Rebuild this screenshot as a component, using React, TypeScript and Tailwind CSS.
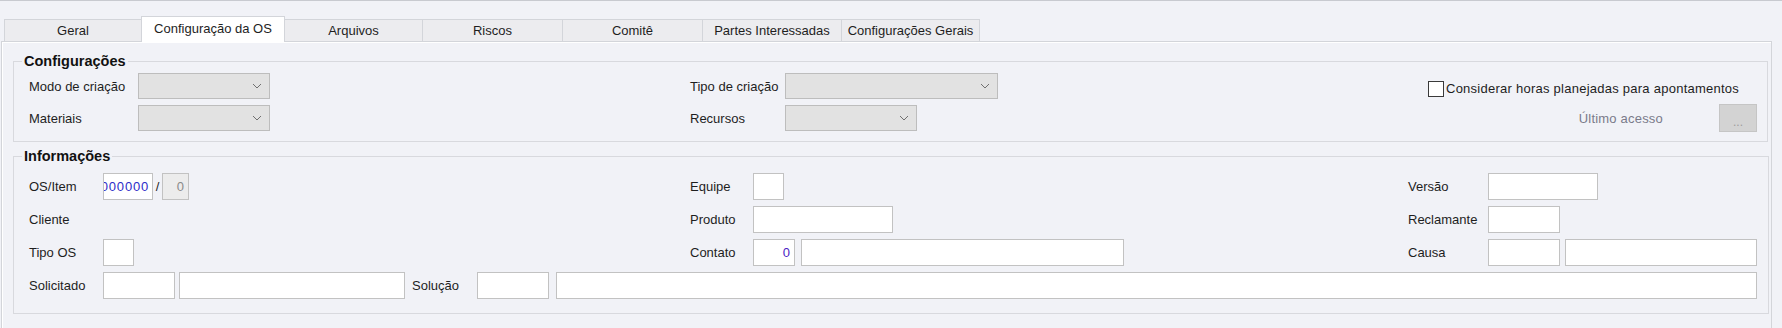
import React from "react";

function Chevron() {
  return (
    <svg width="10" height="6" viewBox="0 0 10 6" className="absolute right-[7px] top-1/2 -translate-y-1/2">
      <polyline points="1,1 5,5 9,1" fill="none" stroke="#707070" strokeWidth="1" />
    </svg>
  );
}

function Select({ w }: { w: string }) {
  return <div className={`relative h-[26px] ${w} border border-[#bdbdbd] bg-[#e2e2e2]`}><Chevron /></div>;
}

function Input({ w, children, tone }: { w: string; children?: React.ReactNode; tone?: string }) {
  return (
    <div className={`flex h-[27px] ${w} items-center justify-end overflow-hidden whitespace-nowrap border border-[#c2c2c2] pr-[4px] ${tone ?? "bg-white"}`}>
      {children}
    </div>
  );
}

function Label({ w, children, cls }: { w: string; children: React.ReactNode; cls?: string }) {
  return <div className={`flex h-[27px] shrink-0 ${w} items-center whitespace-nowrap ${cls ?? ""}`}>{children}</div>;
}

export default function App() {
  const tabBase = "flex h-[22px] items-center justify-center border-t border-[#d3d5da] bg-[#ececef] whitespace-nowrap";
  return (
    <div className="h-[328px] w-[1782px] overflow-hidden bg-[#f1f2f7] font-['Liberation_Sans',Arial,sans-serif] text-[13px] leading-[15px] text-[#1e1e1e]">
      <div className="h-px bg-[#c8cad0]" />
      <div className="flex items-end pl-[4px] pt-[15px]">
        <div className={`${tabBase} w-[137px] border-l`}>Geral</div>
        <div className="relative z-10 -mb-px flex h-[26px] w-[144px] items-center justify-center whitespace-nowrap border-x border-t border-[#d3d5da] bg-white pb-[3px]">
          Configuração da OS
        </div>
        <div className={`${tabBase} w-[138px] border-r`}>Arquivos</div>
        <div className={`${tabBase} w-[140px] border-r`}>Riscos</div>
        <div className={`${tabBase} w-[140px] border-r`}>Comitê</div>
        <div className={`${tabBase} w-[139px] border-r`}>Partes Interessadas</div>
        <div className={`${tabBase} w-[138px] border-r`}>Configurações Gerais</div>
      </div>

      <div className="ml-px mr-[10px] h-[287px] border-x border-t border-[#d3d5da] pl-[11px] pr-[3px] pt-[11px] shadow-[inset_1px_1px_0_#ffffff]">
        <fieldset className="border border-[#d8d9de]">
          <legend className="ml-[8px] px-[2px] text-[14.5px] font-bold leading-[16px] text-[#111]">Configurações</legend>
          <div className="flex flex-col gap-[7px] pb-[9px] pl-[15px] pr-[10px] pt-[4px]">
            <div className="flex h-[26px]">
              <div className="flex w-[661px] shrink-0">
                <Label w="w-[109px]" cls="h-[26px]">Modo de criação</Label>
                <Select w="w-[132px]" />
              </div>
              <div className="flex w-[718px] shrink-0">
                <Label w="w-[95px]" cls="h-[26px]">Tipo de criação</Label>
                <Select w="w-[213px]" />
              </div>
              <div className="flex flex-1 items-start pl-[20px] pt-[8px]">
                <div className="h-[16px] w-[16px] shrink-0 border border-[#3a3a3a] bg-white" />
                <span className="ml-[2px] whitespace-nowrap tracking-[0.25px]">Considerar horas planejadas para apontamentos</span>
              </div>
            </div>
            <div className="flex h-[26px] items-end">
              <div className="flex w-[661px] shrink-0">
                <Label w="w-[109px]" cls="h-[26px]">Materiais</Label>
                <Select w="w-[132px]" />
              </div>
              <div className="flex w-[718px] shrink-0">
                <Label w="w-[95px]" cls="h-[26px]">Recursos</Label>
                <Select w="w-[132px]" />
              </div>
              <div className="flex flex-1 items-end justify-end">
                <Label w="w-auto" cls="h-[26px] text-[#7a7b8a] tracking-[0.2px]">Último acesso</Label>
                <div className="ml-[56px] flex h-[28px] w-[38px] items-end justify-center border border-[#c5c5c5] bg-[#d3d3d3] pb-[3px] text-[12px] leading-[12px] text-[#9d9d9d]">
                  ...
                </div>
              </div>
            </div>
          </div>
        </fieldset>

        <fieldset className="mt-[6px] border border-[#d8d9de]">
          <legend className="ml-[8px] px-[2px] text-[14.5px] font-bold leading-[16px] text-[#111]">Informações</legend>
          <div className="flex flex-col gap-[6px] pb-[14px] pl-[15px] pr-[11px] pt-[9px]">
            <div className="flex h-[27px]">
              <div className="flex w-[661px] shrink-0">
                <Label w="w-[74px]">OS/Item</Label>
                <div className="flex h-[27px] w-[50px] items-center justify-end overflow-hidden whitespace-nowrap border border-[#c2c2c2] bg-white pr-[3px] tracking-[0.8px] text-[#2d2dc8]">
                  000000
                </div>
                <div className="flex h-[27px] w-[9px] items-center justify-center">/</div>
                <Input w="w-[27px]" tone="bg-[#ececec] text-[#8a8a8a]">0</Input>
              </div>
              <div className="flex w-[718px] shrink-0">
                <Label w="w-[63px]">Equipe</Label>
                <Input w="w-[31px]" />
              </div>
              <div className="flex flex-1">
                <Label w="w-[80px]">Versão</Label>
                <Input w="w-[110px]" />
              </div>
            </div>
            <div className="flex h-[27px]">
              <div className="flex w-[661px] shrink-0">
                <Label w="w-[74px]">Cliente</Label>
              </div>
              <div className="flex w-[718px] shrink-0">
                <Label w="w-[63px]">Produto</Label>
                <Input w="w-[140px]" />
              </div>
              <div className="flex flex-1">
                <Label w="w-[80px]">Reclamante</Label>
                <Input w="w-[72px]" />
              </div>
            </div>
            <div className="flex h-[27px]">
              <div className="flex w-[661px] shrink-0">
                <Label w="w-[74px]">Tipo OS</Label>
                <Input w="w-[31px]" />
              </div>
              <div className="flex w-[718px] shrink-0 gap-[6px]">
                <Label w="w-[57px]">Contato</Label>
                <Input w="w-[42px]" tone="bg-white text-[#4a22c4]">0</Input>
                <Input w="w-[323px]" />
              </div>
              <div className="flex flex-1 gap-[5px]">
                <Label w="w-[75px]">Causa</Label>
                <Input w="w-[72px]" />
                <Input w="w-[192px]" />
              </div>
            </div>
            <div className="flex h-[27px]">
              <Label w="w-[74px]">Solicitado</Label>
              <Input w="w-[72px]" />
              <div className="w-[4px] shrink-0" />
              <Input w="w-[226px]" />
              <Label w="w-[72px]" cls="pl-[7px]">Solução</Label>
              <Input w="w-[72px]" />
              <div className="w-[7px] shrink-0" />
              <Input w="flex-1" />
            </div>
          </div>
        </fieldset>
      </div>
    </div>
  );
}
